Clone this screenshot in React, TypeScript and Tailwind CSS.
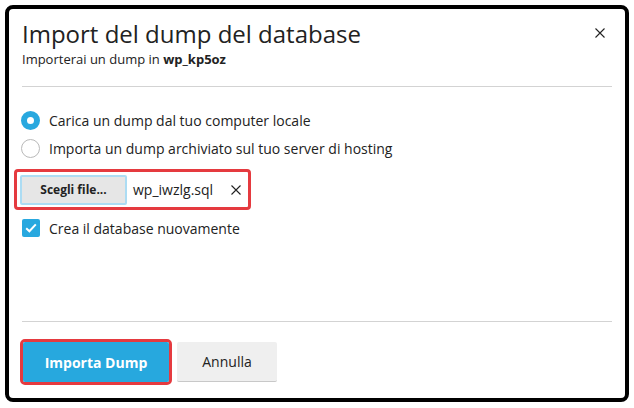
import React from "react";

function CloseIcon({ size = 10 }: { size?: number }) {
  return (
    <svg width={size} height={size} viewBox="0 0 10 10" className="shrink-0">
      <path d="M0.5 0.5 L9.5 9.5 M9.5 0.5 L0.5 9.5" stroke="#222" strokeWidth="1.1" fill="none" />
    </svg>
  );
}

function Radio({ checked, label }: { checked?: boolean; label: string }) {
  return (
    <label className="flex items-center h-[28px] gap-[9px] -ml-[1px]">
      {checked ? (
        <span className="w-[19px] h-[19px] rounded-full border-[6px] border-[#28a8df] bg-white shrink-0" />
      ) : (
        <span className="w-[19px] h-[19px] rounded-full border border-[#b9b9b9] bg-white shrink-0" />
      )}
      <span className="text-[14px] text-[#222]">{label}</span>
    </label>
  );
}

export default function App() {
  return (
    <div
      className="w-[634px] h-[408px] bg-white p-[5px]"
      style={{ fontFamily: '"Open Sans", "Liberation Sans", sans-serif' }}
    >
      <div className="w-[624px] h-[397px] border-4 border-black rounded-[8px] bg-white flex flex-col px-[13px]">
        {/* header */}
        <div className="flex items-start justify-between pt-[9px]">
          <div>
            <h1 className="text-[24px] leading-[32px] text-[#222] font-normal">Import del dump del database</h1>
            <p className="text-[13px] leading-[18px] text-[#222]">
              Importerai un dump in <b className="font-bold">wp_kp5oz</b>
            </p>
          </div>
          <div className="mt-[10px] mr-[7px]">
            <CloseIcon />
          </div>
        </div>
        <div className="mt-[18px] h-px bg-[#d3d3d3]" />

        {/* body */}
        <div className="mt-[19px] flex flex-col">
          <Radio checked label="Carica un dump dal tuo computer locale" />
          <Radio label="Importa un dump archiviato sul tuo server di hosting" />

          <div className="mt-[7px] -ml-[8px] w-[237px] h-[41px] border-[3px] border-[#e53a3f] rounded-[4px] flex items-center pl-[3px]">
            <button className="w-[107px] h-[30px] bg-[#e6e6e6] border-2 border-[#acdcf3] rounded-[2px] text-[12px] font-bold text-[#222]">
              Scegli file...
            </button>
            <span className="ml-[6px] text-[14px] text-[#222]">wp_iwzlg.sql</span>
            <span className="ml-[18px]">
              <CloseIcon size={10} />
            </span>
          </div>

          <label className="mt-[4px] flex items-center h-[28px] gap-[9px]">
            <span className="w-[18px] h-[18px] rounded-[2px] bg-[#28a8df] flex items-center justify-center shrink-0">
              <svg width="12" height="10" viewBox="0 0 12 10">
                <path d="M1.2 5.2 L4.4 8.3 L10.8 1.4" stroke="#fff" strokeWidth="2" fill="none" />
              </svg>
            </span>
            <span className="text-[14px] text-[#222]">Crea il database nuovamente</span>
          </label>
        </div>

        <div className="flex-1" />

        {/* footer */}
        <div className="h-px bg-[#d3d3d3]" />
        <div className="flex items-center gap-[5px] mt-[17px] mb-[13px] -ml-[2px]">
          <div className="border-[3px] border-[#e53a3f] rounded-[5px]">
            <button className="w-[146px] h-[40px] bg-[#27a8de] rounded-[2px] text-white text-[14px] font-bold">
              Importa Dump
            </button>
          </div>
          <button className="w-[100px] h-[40px] bg-[#efefef] border-b border-[#c8c8c8] rounded-[2px] text-[#222] text-[14px]">
            Annulla
          </button>
        </div>
      </div>
    </div>
  );
}
